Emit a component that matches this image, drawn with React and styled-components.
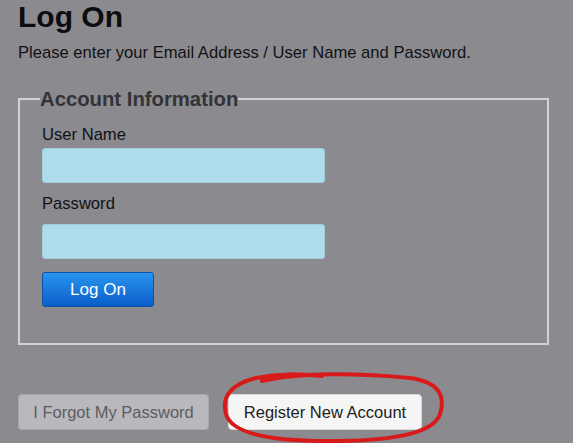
import React from 'react';
import styled, { createGlobalStyle } from 'styled-components';

const GlobalStyle = createGlobalStyle`
  html, body {
    margin: 0;
    padding: 0;
    background: #8a8a8f;
  }
  body {
    font-family: "Liberation Sans", Arial, sans-serif;
    color: #111;
  }
`;

const Page = styled.div`
  position: relative;
  width: 573px;
  height: 443px;
  overflow: hidden;
  padding-left: 18px;
  box-sizing: border-box;
`;

const Title = styled.h1`
  margin: 0;
  font-size: 30px;
  line-height: 34px;
  font-weight: bold;
  color: #0d0d0f;
`;

const Intro = styled.p`
  margin: 9px 0 0;
  font-size: 16.6px;
  line-height: 19px;
  color: #121214;
`;

const Fieldset = styled.fieldset`
  width: 531px;
  box-sizing: border-box;
  margin: 27px 0 0;
  padding: 0 22px 36px;
  border: 2px solid #d2d2d6;
`;

const Legend = styled.legend`
  margin-left: -2px;
  padding: 0;
  font-size: 20.3px;
  line-height: 20px;
  font-weight: bold;
  color: #333336;
`;

const Label = styled.label`
  display: block;
  margin-top: ${p => p.$gap}px;
  font-size: 16.6px;
  line-height: 18px;
  color: #121214;
`;

const Input = styled.input`
  display: block;
  width: 283px;
  height: 35px;
  box-sizing: border-box;
  margin-top: ${p => p.$gap}px;
  border: 1px solid #9fcfdd;
  border-radius: 3px;
  background: #aedcea;
  outline: none;
`;

const SubmitButton = styled.button`
  display: block;
  width: 112px;
  height: 35px;
  margin-top: 13px;
  border: 1px solid #0b52ae;
  border-radius: 3px;
  background: linear-gradient(#2996ef, #0b5dca);
  color: #fff;
  font-family: inherit;
  font-size: 17px;
`;

const Actions = styled.div`
  display: flex;
  gap: 19px;
  margin-top: 49px;
`;

const ActionButton = styled.button`
  width: ${p => p.$width}px;
  height: 36px;
  border: 1px solid ${p => (p.$muted ? '#a9a9ad' : '#d8d8d8')};
  border-radius: 4px;
  background: ${p => (p.$muted ? '#b9b9bd' : '#f5f5f5')};
  color: ${p => (p.$muted ? '#5c5c60' : '#222')};
  font-family: inherit;
  font-size: 16.5px;
`;

const Annotation = styled.svg`
  position: absolute;
  left: 0;
  top: 0;
  pointer-events: none;
`;

export default function App() {
  return (
    <Page>
      <GlobalStyle />
      <Title>Log On</Title>
      <Intro>Please enter your Email Address / User Name and Password.</Intro>

      <Fieldset>
        <Legend>Account Information</Legend>
        <Label $gap={17}>User Name</Label>
        <Input $gap={4} type="text" />
        <Label $gap={12}>Password</Label>
        <Input $gap={11} type="password" />
        <SubmitButton>Log On</SubmitButton>
      </Fieldset>

      <Actions>
        <ActionButton $muted $width={191}>I Forgot My Password</ActionButton>
        <ActionButton $width={194}>Register New Account</ActionButton>
      </Actions>

      <Annotation width="573" height="443" viewBox="0 0 573 443">
        <path
          d="M262 381 C300 372 360 373 410 378 C438 382 446 395 440 414 C434 432 400 440 340 441 C280 442 232 436 226 414 C221 396 232 384 256 378 C280 373 300 374 322 376"
          fill="none"
          stroke="#d81a1a"
          strokeWidth="4"
          strokeLinecap="round"
        />
      </Annotation>
    </Page>
  );
}
